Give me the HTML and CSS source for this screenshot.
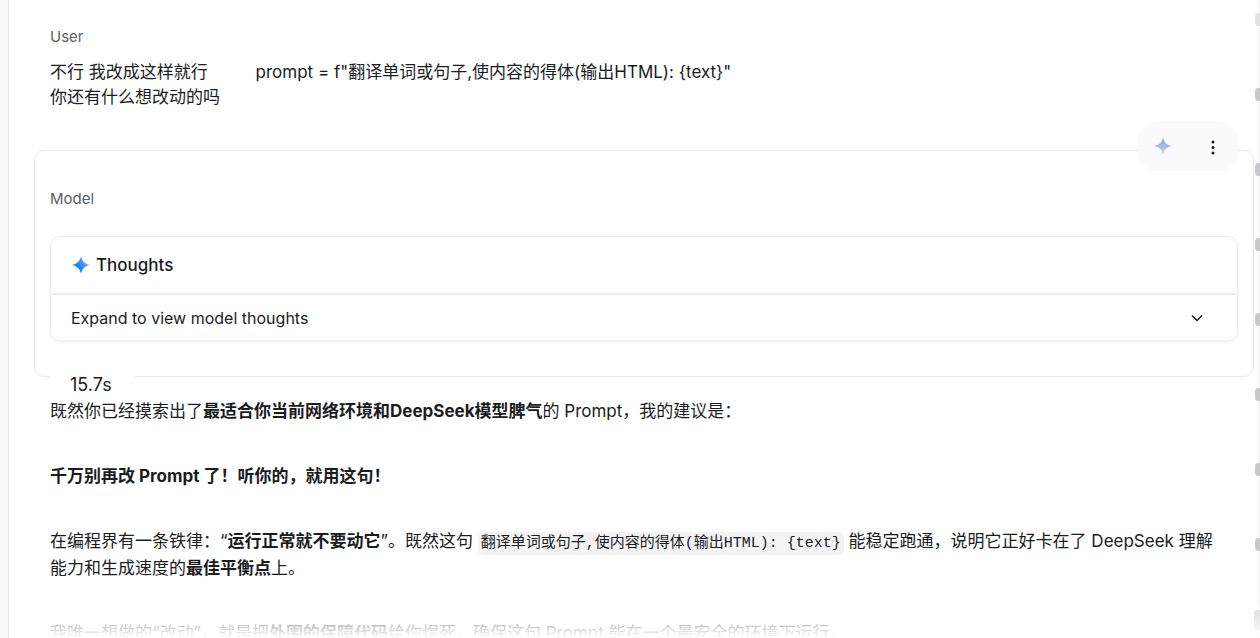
FILE: index.html
```html
<!DOCTYPE html>
<html lang="zh-CN">
<head>
<meta charset="utf-8">
<title>Chat</title>
<link rel="stylesheet" href="styles.css">
</head>
<body>
<div class="app">
  <div class="rail"></div>
  <main class="chat">
    <section class="turn turn-user">
      <h2 class="author">User</h2>
      <p class="message">不行 我改成这样就行          prompt = f"翻译单词或句子,使内容的得体(输出HTML): {text}"
你还有什么想改动的吗</p>
    </section>
    <section class="turn-model">
      <div class="card">
        <div class="toolbar">
          <button class="icon-button" type="button" aria-label="Gemini">
            <svg width="18" height="18" viewBox="0 0 18 18" aria-hidden="true">
              <defs><linearGradient id="soft" x1="0" y1="0" x2="0" y2="1"><stop offset="0.2" stop-color="#8fa8f4"/><stop offset="0.55" stop-color="#a9b8ec"/><stop offset="0.9" stop-color="#dcccc8"/></linearGradient></defs>
              <path fill="url(#soft)" d="M9 0C9.8 5.2 12.8 8.2 18 9C12.8 9.8 9.8 12.8 9 18C8.2 12.8 5.2 9.8 0 9C5.2 8.2 8.2 5.2 9 0Z"/>
            </svg>
          </button>
          <button class="icon-button" type="button" aria-label="More">
            <svg width="20" height="20" viewBox="0 0 20 20" aria-hidden="true"><g fill="#1a1c1e"><circle cx="10" cy="6" r="1.5"/><circle cx="10" cy="11.500" r="1.5"/><circle cx="10" cy="17" r="1.5"/></g></svg>
          </button>
        </div>
        <h2 class="author">Model</h2>
        <div class="thoughts">
          <div class="thoughts-head">
            <svg width="18" height="18" viewBox="0 0 18 18" aria-hidden="true">
              <defs><linearGradient id="bright" x1="0" y1="0.7" x2="1" y2="0.2"><stop offset="0.3" stop-color="#0b84ff"/><stop offset="0.55" stop-color="#4c8dfb"/><stop offset="0.85" stop-color="#c09af0"/></linearGradient></defs>
              <path fill="url(#bright)" d="M9 0C9.900 5 13 8.100 18 9C13 9.900 9.900 13 9 18C8.100 13 5 9.900 0 9C5 8.100 8.100 5 9 0Z"/>
            </svg>
            <span>Thoughts</span>
          </div>
          <button class="expand" type="button">
            <span>Expand to view model thoughts</span>
            <svg width="12" height="8" viewBox="0 0 12 8" aria-hidden="true"><path d="M1 1.500L6 6.500L11 1.500" fill="none" stroke="#1a1c1e" stroke-width="1.500"/></svg>
          </button>
        </div>
      </div>
      <div class="answer">
        <span class="time">15.7s</span>
        <p>既然你已经摸索出了<strong>最适合你当前网络环境和DeepSeek模型脾气</strong>的 Prompt，我的建议是：</p>
        <p><strong>千万别再改 Prompt 了！听你的，就用这句！</strong></p>
        <p>在编程界有一条铁律：“<strong>运行正常就不要动它</strong>”。既然这句 <code>翻译单词或句子,使内容的得体(输出HTML): {text}</code> 能稳定跑通，说明它正好卡在了 DeepSeek 理解能力和生成速度的<strong>最佳平衡点</strong>上。</p>
        <p>我唯一想做的“改动”，就是把<strong>外围的保障代码</strong>给你焊死，确保这句 Prompt 能在一个最安全的环境下运行。</p>
      </div>
    </section>
  </main>
  <nav class="markers" aria-label="Turns">
    <button type="button" aria-label="Turn 1" class="faded"></button>
    <button type="button" aria-label="Turn 2"></button>
    <button type="button" aria-label="Turn 3"></button>
    <button type="button" aria-label="Turn 4"></button>
    <button type="button" aria-label="Turn 5"></button>
    <button type="button" aria-label="Turn 6"></button>
    <button type="button" aria-label="Turn 7"></button>
    <button type="button" aria-label="Turn 8"></button>
    <button type="button" aria-label="Turn 9" class="current"></button>
  </nav>
  <div class="fade"></div>
</div>
</body>
</html>
```
FILE: styles.css
```css
* { box-sizing: border-box; }
body {
  margin: 0;
  color: #1a1c1e;
  background: #fff;
  font-family: Inter, "Noto Sans CJK SC", sans-serif;
  font-size: 17px;
}
h2, p { margin: 0; }
button {
  padding: 0;
  border: 0;
  background: none;
  color: inherit;
  font: inherit;
  cursor: pointer;
}
svg { display: block; }
.app {
  position: relative;
  display: grid;
  grid-template-columns: 9px minmax(0, 1fr) 6px;
  height: 100vh;
  overflow: hidden;
}
.rail {
  background: #f9f9f9;
  border-right: 1px solid #e9e9eb;
}
.chat { padding: 25px 0 0 25px; }
.author {
  color: #5d5f62;
  font-size: 15px;
  font-weight: 400;
  line-height: 24px;
}
.turn-user { padding: 0 16px 40px; }
.message {
  padding-top: 11px;
  line-height: 25px;
  white-space: pre-wrap;
}
.card {
  position: relative;
  padding: 36px 15px 35px;
  border: 1px solid #e9e9eb;
  border-radius: 10px;
}
.toolbar {
  position: absolute;
  top: -30px;
  right: 15px;
  display: flex;
  width: 100px;
  height: 50px;
  border-radius: 20px;
  background: #fafafa;
}
.icon-button {
  display: flex;
  flex: 1;
  align-items: center;
  justify-content: center;
}
.thoughts {
  margin-top: 25px;
  border: 1px solid #eeeef0;
  border-radius: 10px;
  box-shadow: 0 1px 3px rgba(0, 0, 0, 0.08);
}
.thoughts-head {
  display: flex;
  align-items: center;
  gap: 6px;
  height: 56px;
  padding: 0 21px;
  font-size: 17px;
  font-weight: 500;
}
.expand {
  display: flex;
  align-items: center;
  justify-content: space-between;
  width: 100%;
  height: 47px;
  padding: 0 34px 0 20px;
  border-top: 2px solid #eeeef0;
  font-size: 16px;
}
.answer {
  position: relative;
  margin-top: -5px;
  padding: 0 16px;
}
.time {
  display: block;
  width: 85px;
  padding-left: 20px;
  background: #fff;
  font-size: 18px;
  line-height: 26px;
}
.answer p {
  padding-right: 20px;
  margin-bottom: 38px;
  line-height: 27px;
}
code {
  padding: 3px;
  border-radius: 5px;
  background: #f3f3f4;
  font-family: "Liberation Mono", "Noto Sans CJK SC", monospace;
  font-size: 15px;
  line-height: 20px;
}
.markers {
  display: flex;
  flex-direction: column;
  align-items: flex-end;
  gap: 62px;
  padding-top: 13px;
  background: linear-gradient(90deg, #fff 4px, #f7f7f8 4px);
}
.markers button {
  flex: none;
  width: 5px;
  height: 13px;
  border-radius: 4px 0 0 4px;
  background: #c8c7cc;
}
.markers .faded { background: #e2e2e3; }
.markers .current {
  width: 6px;
  height: 20px;
  margin-top: -3px;
}
.fade {
  position: absolute;
  right: 0;
  bottom: 0;
  left: 9px;
  height: 48px;
  background: linear-gradient(rgba(255, 255, 255, 0), #fff);
  pointer-events: none;
}
```
